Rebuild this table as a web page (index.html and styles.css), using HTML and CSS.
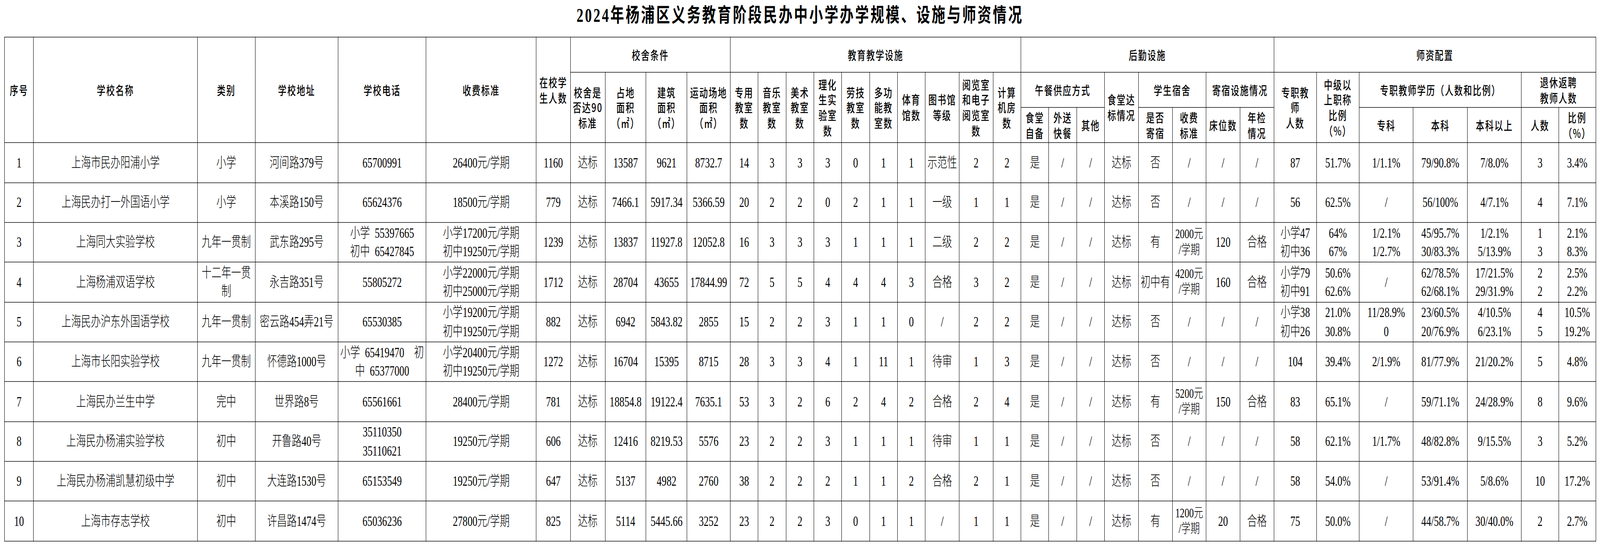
FILE: index.html
```html
<!DOCTYPE html>
<html lang="zh-CN">
<head>
<meta charset="utf-8">
<title>2024年杨浦区义务教育阶段民办中小学办学规模、设施与师资情况</title>
<link rel="stylesheet" href="styles.css">
</head>
<body>
<div class="page">
<div class="title">2024年杨浦区义务教育阶段民办中小学办学规模、设施与师资情况</div>
<table class="sheet">
<colgroup>
<col class="c106"><col class="c600"><col class="c211"><col class="c304"><col class="c322"><col class="c403">
<col class="c125"><col class="c127"><col class="c150"><col class="c150"><col class="c158">
<col class="c102"><col class="c102"><col class="c102"><col class="c102"><col class="c102"><col class="c102"><col class="c102">
<col class="c124"><col class="c124"><col class="c102">
<col class="c102"><col class="c102"><col class="c102">
<col class="c124"><col class="c124"><col class="c124"><col class="c124"><col class="c124">
<col class="c156"><col class="c156"><col class="c198"><col class="c198"><col class="c198"><col class="c136"><col class="c136">
</colgroup>
<thead>
<tr class="h1">
<th rowspan="3">序号</th>
<th rowspan="3">学校名称</th>
<th rowspan="3">类别</th>
<th rowspan="3">学校地址</th>
<th rowspan="3">学校电话</th>
<th rowspan="3">收费标准</th>
<th rowspan="3">在校学<br>生人数</th>
<th colspan="4">校舍条件</th>
<th colspan="10">教育教学设施</th>
<th colspan="8">后勤设施</th>
<th colspan="7">师资配置</th>
</tr>
<tr class="h2">
<th rowspan="2">校舍是<br>否达90<br>标准</th>
<th rowspan="2">占地<br>面积<br>（㎡）</th>
<th rowspan="2">建筑<br>面积<br>（㎡）</th>
<th rowspan="2">运动场地<br>面积（㎡）</th>
<th rowspan="2">专用<br>教室<br>数</th>
<th rowspan="2">音乐<br>教室<br>数</th>
<th rowspan="2">美术<br>教室<br>数</th>
<th rowspan="2">理化<br>生实<br>验室<br>数</th>
<th rowspan="2">劳技<br>教室<br>数</th>
<th rowspan="2">多功<br>能教<br>室数</th>
<th rowspan="2">体育<br>馆数</th>
<th rowspan="2">图书馆<br>等级</th>
<th rowspan="2">阅览室<br>和电子<br>阅览室<br>数</th>
<th rowspan="2">计算<br>机房<br>数</th>
<th colspan="3">午餐供应方式</th>
<th rowspan="2">食堂达<br>标情况</th>
<th colspan="2">学生宿舍</th>
<th colspan="2">寄宿设施情况</th>
<th rowspan="2">专职教<br>师<br>人数</th>
<th rowspan="2">中级以<br>上职称<br>比例<br>（%）</th>
<th colspan="3">专职教师学历（人数和比例）</th>
<th colspan="2">退休返聘<br>教师人数</th>
</tr>
<tr class="h3">
<th>食堂<br>自备</th>
<th>外送<br>快餐</th>
<th>其他</th>
<th>是否<br>寄宿</th>
<th>收费<br>标准</th>
<th>床位数</th>
<th>年检<br>情况</th>
<th>专科</th>
<th>本科</th>
<th>本科以上</th>
<th>人数</th>
<th>比例<br>（%）</th>
</tr>
</thead>
<tbody>
<tr class="row">
<td>1</td><td>上海市民办阳浦小学</td><td>小学</td><td>河间路379号</td><td>65700991</td><td>26400元/学期</td>
<td>1160</td><td>达标</td><td>13587</td><td>9621</td><td>8732.7</td>
<td>14</td><td>3</td><td>3</td><td>3</td><td>0</td><td>1</td><td>1</td><td>示范性</td><td>2</td><td>2</td>
<td>是</td><td>/</td><td>/</td><td>达标</td><td>否</td><td>/</td><td>/</td><td>/</td>
<td>87</td><td>51.7%</td><td>1/1.1%</td><td>79/90.8%</td><td>7/8.0%</td><td>3</td><td>3.4%</td>
</tr>
<tr class="row">
<td>2</td><td>上海民办打一外国语小学</td><td>小学</td><td>本溪路150号</td><td>65624376</td><td>18500元/学期</td>
<td>779</td><td>达标</td><td>7466.1</td><td>5917.34</td><td>5366.59</td>
<td>20</td><td>2</td><td>2</td><td>0</td><td>2</td><td>1</td><td>1</td><td>一级</td><td>1</td><td>1</td>
<td>是</td><td>/</td><td>/</td><td>达标</td><td>否</td><td>/</td><td>/</td><td>/</td>
<td>56</td><td>62.5%</td><td>/</td><td>56/100%</td><td>4/7.1%</td><td>4</td><td>7.1%</td>
</tr>
<tr class="row">
<td>3</td><td>上海同大实验学校</td><td>九年一贯制</td><td>武东路295号</td><td>小学&ensp;55397665<br>初中&ensp;65427845</td><td>小学17200元/学期<br>初中19250元/学期</td>
<td>1239</td><td>达标</td><td>13837</td><td>11927.8</td><td>12052.8</td>
<td>16</td><td>3</td><td>3</td><td>3</td><td>1</td><td>1</td><td>1</td><td>二级</td><td>2</td><td>2</td>
<td>是</td><td>/</td><td>/</td><td>达标</td><td>有</td><td class="tight">2000元<br>/学期</td><td>120</td><td>合格</td>
<td>小学47<br>初中36</td><td>64%<br>67%</td><td>1/2.1%<br>1/2.7%</td><td>45/95.7%<br>30/83.3%</td><td>1/2.1%<br>5/13.9%</td><td>1<br>3</td><td>2.1%<br>8.3%</td>
</tr>
<tr class="row">
<td>4</td><td>上海杨浦双语学校</td><td>十二年一贯制</td><td>永吉路351号</td><td>55805272</td><td>小学22000元/学期<br>初中25000元/学期</td>
<td>1712</td><td>达标</td><td>28704</td><td>43655</td><td>17844.99</td>
<td>72</td><td>5</td><td>5</td><td>4</td><td>4</td><td>4</td><td>3</td><td>合格</td><td>3</td><td>2</td>
<td>是</td><td>/</td><td>/</td><td>达标</td><td>初中有</td><td class="tight">4200元<br>/学期</td><td>160</td><td>合格</td>
<td>小学79<br>初中91</td><td>50.6%<br>62.6%</td><td>/</td><td>62/78.5%<br>62/68.1%</td><td>17/21.5%<br>29/31.9%</td><td>2<br>2</td><td>2.5%<br>2.2%</td>
</tr>
<tr class="row">
<td>5</td><td>上海民办沪东外国语学校</td><td>九年一贯制</td><td>密云路454弄21号</td><td>65530385</td><td>小学19200元/学期<br>初中19250元/学期</td>
<td>882</td><td>达标</td><td>6942</td><td>5843.82</td><td>2855</td>
<td>15</td><td>2</td><td>2</td><td>3</td><td>1</td><td>1</td><td>0</td><td>/</td><td>2</td><td>2</td>
<td>是</td><td>/</td><td>/</td><td>达标</td><td>否</td><td>/</td><td>/</td><td>/</td>
<td>小学38<br>初中26</td><td>21.0%<br>30.8%</td><td>11/28.9%<br>0</td><td>23/60.5%<br>20/76.9%</td><td>4/10.5%<br>6/23.1%</td><td>4<br>5</td><td>10.5%<br>19.2%</td>
</tr>
<tr class="row">
<td>6</td><td>上海市长阳实验学校</td><td>九年一贯制</td><td>怀德路1000号</td><td>小学&ensp;65419470&emsp;初<br>中&ensp;65377000</td><td>小学20400元/学期<br>初中19250元/学期</td>
<td>1272</td><td>达标</td><td>16704</td><td>15395</td><td>8715</td>
<td>28</td><td>3</td><td>3</td><td>4</td><td>1</td><td>11</td><td>1</td><td>待审</td><td>1</td><td>3</td>
<td>是</td><td>/</td><td>/</td><td>达标</td><td>否</td><td>/</td><td>/</td><td>/</td>
<td>104</td><td>39.4%</td><td>2/1.9%</td><td>81/77.9%</td><td>21/20.2%</td><td>5</td><td>4.8%</td>
</tr>
<tr class="row">
<td>7</td><td>上海民办兰生中学</td><td>完中</td><td>世界路8号</td><td>65561661</td><td>28400元/学期</td>
<td>781</td><td>达标</td><td>18854.8</td><td>19122.4</td><td>7635.1</td>
<td>53</td><td>3</td><td>2</td><td>6</td><td>2</td><td>4</td><td>2</td><td>合格</td><td>2</td><td>4</td>
<td>是</td><td>/</td><td>/</td><td>达标</td><td>有</td><td class="tight">5200元<br>/学期</td><td>150</td><td>合格</td>
<td>83</td><td>65.1%</td><td>/</td><td>59/71.1%</td><td>24/28.9%</td><td>8</td><td>9.6%</td>
</tr>
<tr class="row">
<td>8</td><td>上海民办杨浦实验学校</td><td>初中</td><td>开鲁路40号</td><td>35110350<br>35110621</td><td>19250元/学期</td>
<td>606</td><td>达标</td><td>12416</td><td>8219.53</td><td>5576</td>
<td>23</td><td>2</td><td>2</td><td>3</td><td>1</td><td>1</td><td>1</td><td>待审</td><td>1</td><td>1</td>
<td>是</td><td>/</td><td>/</td><td>达标</td><td>否</td><td>/</td><td>/</td><td>/</td>
<td>58</td><td>62.1%</td><td>1/1.7%</td><td>48/82.8%</td><td>9/15.5%</td><td>3</td><td>5.2%</td>
</tr>
<tr class="row">
<td>9</td><td>上海民办杨浦凯慧初级中学</td><td>初中</td><td>大连路1530号</td><td>65153549</td><td>19250元/学期</td>
<td>647</td><td>达标</td><td>5137</td><td>4982</td><td>2760</td>
<td>38</td><td>2</td><td>2</td><td>2</td><td>1</td><td>1</td><td>2</td><td>合格</td><td>2</td><td>1</td>
<td>是</td><td>/</td><td>/</td><td>达标</td><td>否</td><td>/</td><td>/</td><td>/</td>
<td>58</td><td>54.0%</td><td>/</td><td>53/91.4%</td><td>5/8.6%</td><td>10</td><td>17.2%</td>
</tr>
<tr class="row">
<td>10</td><td>上海市存志学校</td><td>初中</td><td>许昌路1474号</td><td>65036236</td><td>27800元/学期</td>
<td>825</td><td>达标</td><td>5114</td><td>5445.66</td><td>3252</td>
<td>23</td><td>2</td><td>2</td><td>3</td><td>0</td><td>1</td><td>1</td><td>/</td><td>1</td><td>1</td>
<td>是</td><td>/</td><td>/</td><td>达标</td><td>有</td><td class="tight">1200元<br>/学期</td><td>20</td><td>合格</td>
<td>75</td><td>50.0%</td><td>/</td><td>44/58.7%</td><td>30/40.0%</td><td>2</td><td>2.7%</td>
</tr>
</tbody>
</table>
</div>
</body>
</html>
```
FILE: styles.css
```css
/* 1rem = 10 column-pixels of the original 5856px-wide sheet */
html {
  font-size: calc(100vw / 585.6);
  margin: 0;
  padding: 0;
  background: #ffffff;
}
body {
  margin: 0;
  padding: 0;
  min-height: 100vh;
  color: #000000;
}
.page {
  width: 585.6rem;
  transform: scaleY(1.4297);
  transform-origin: 0 0;
}
.title {
  height: 8rem;
  line-height: 8rem;
  margin: 0 0 1.5rem;
  text-align: center;
  font-family: "Liberation Serif", "Noto Sans CJK SC", serif;
  font-weight: 700;
  font-size: 5rem;
  letter-spacing: 0.6rem;
  white-space: nowrap;
}
.sheet {
  width: 582.4rem;
  margin: 0 1.6rem;
  border-collapse: collapse;
  table-layout: fixed;
}
.sheet th,
.sheet td {
  border: 0.2rem solid #000000;
  padding: 0 0.4rem;
  text-align: center;
  vertical-align: middle;
  overflow: hidden;
}
.sheet th {
  font-family: "Noto Sans CJK SC", sans-serif;
  font-weight: 500;
  font-size: 3.1rem;
  letter-spacing: 0.3rem;
  line-height: 4rem;
}
.sheet td {
  font-family: "Liberation Serif", "Noto Sans CJK SC", serif;
  font-weight: 300;
  font-size: 3.6rem;
  line-height: 4.8rem;
}
.sheet td.tight {
  font-size: 3.4rem;
  line-height: 4rem;
}
.h1 { height: 8.9rem; }
.h2 { height: 9.1rem; }
.h3 { height: 9rem; }
.row { height: 10.2rem; }

.c102 { width: 10.2rem; }
.c106 { width: 10.6rem; }
.c124 { width: 12.4rem; }
.c125 { width: 12.5rem; }
.c127 { width: 12.7rem; }
.c136 { width: 13.6rem; }
.c150 { width: 15rem; }
.c156 { width: 15.6rem; }
.c158 { width: 15.8rem; }
.c198 { width: 19.8rem; }
.c211 { width: 21.1rem; }
.c304 { width: 30.4rem; }
.c322 { width: 32.2rem; }
.c403 { width: 40.3rem; }
.c600 { width: 60rem; }
```
